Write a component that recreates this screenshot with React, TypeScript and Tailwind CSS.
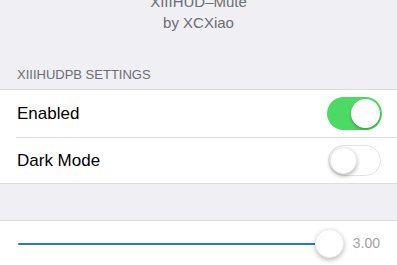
import React from "react";

function Toggle({ on }: { on: boolean }) {
  if (on) {
    return (
      <div className="w-[55px] h-[33px] rounded-full bg-[#4cd964] flex items-center justify-end p-[2px]">
        <div className="w-[29px] h-[29px] rounded-full bg-white shadow-[0_2px_3px_rgba(0,0,0,0.25)]" />
      </div>
    );
  }
  return (
    <div className="w-[53px] h-[31px] rounded-full bg-white border-[1.5px] border-[#e3e3e8] flex items-center justify-start p-[1px]">
      <div className="w-[27px] h-[27px] rounded-full bg-white shadow-[0_2px_4px_rgba(0,0,0,0.3)] border border-[#ececec]" />
    </div>
  );
}

export default function App() {
  return (
    <div
      className="w-[397px] h-[265px] overflow-hidden bg-[#efeff4]"
      style={{ fontFamily: '"Liberation Sans", Arial, sans-serif' }}
    >
      <div className="-mt-[9px] flex flex-col items-center text-[15px] leading-[21px] text-[#6d6d72]">
        <div>XIIIHUD–Mute</div>
        <div>by XCXiao</div>
      </div>
      <div className="mt-[34px] px-[17px] text-[13px] leading-[16px] text-[#6d6d72]">
        XIIIHUDPB SETTINGS
      </div>
      <div className="mt-[6px] bg-white border-y border-[#dcdce0]">
        <div className="h-[47px] flex items-center justify-between pl-[17px] pr-[15px] text-[17px] text-black">
          <span>Enabled</span>
          <Toggle on />
        </div>
        <div className="ml-[16px] h-px bg-[#dedee2]" />
        <div className="h-[45px] flex items-center justify-between pl-[17px] pr-[16px] text-[17px] text-black">
          <span>Dark Mode</span>
          <Toggle on={false} />
        </div>
      </div>
      <div className="h-[36px]" />
      <div className="bg-white border-t border-[#dcdce0] h-[46px] flex items-center pl-[18px] pr-[17px]">
        <div className="flex-1 flex items-center">
          <div className="flex-1 h-[2px] bg-[#1f7bd8] rounded-l" />
          <div className="w-[29px] h-[29px] rounded-full bg-white shadow-[0_2px_5px_rgba(0,0,0,0.28)] border border-[#eeeeee]" />
        </div>
        <span className="ml-[9px] text-[14px] text-[#a2a2a7]">3.00</span>
      </div>
    </div>
  );
}
